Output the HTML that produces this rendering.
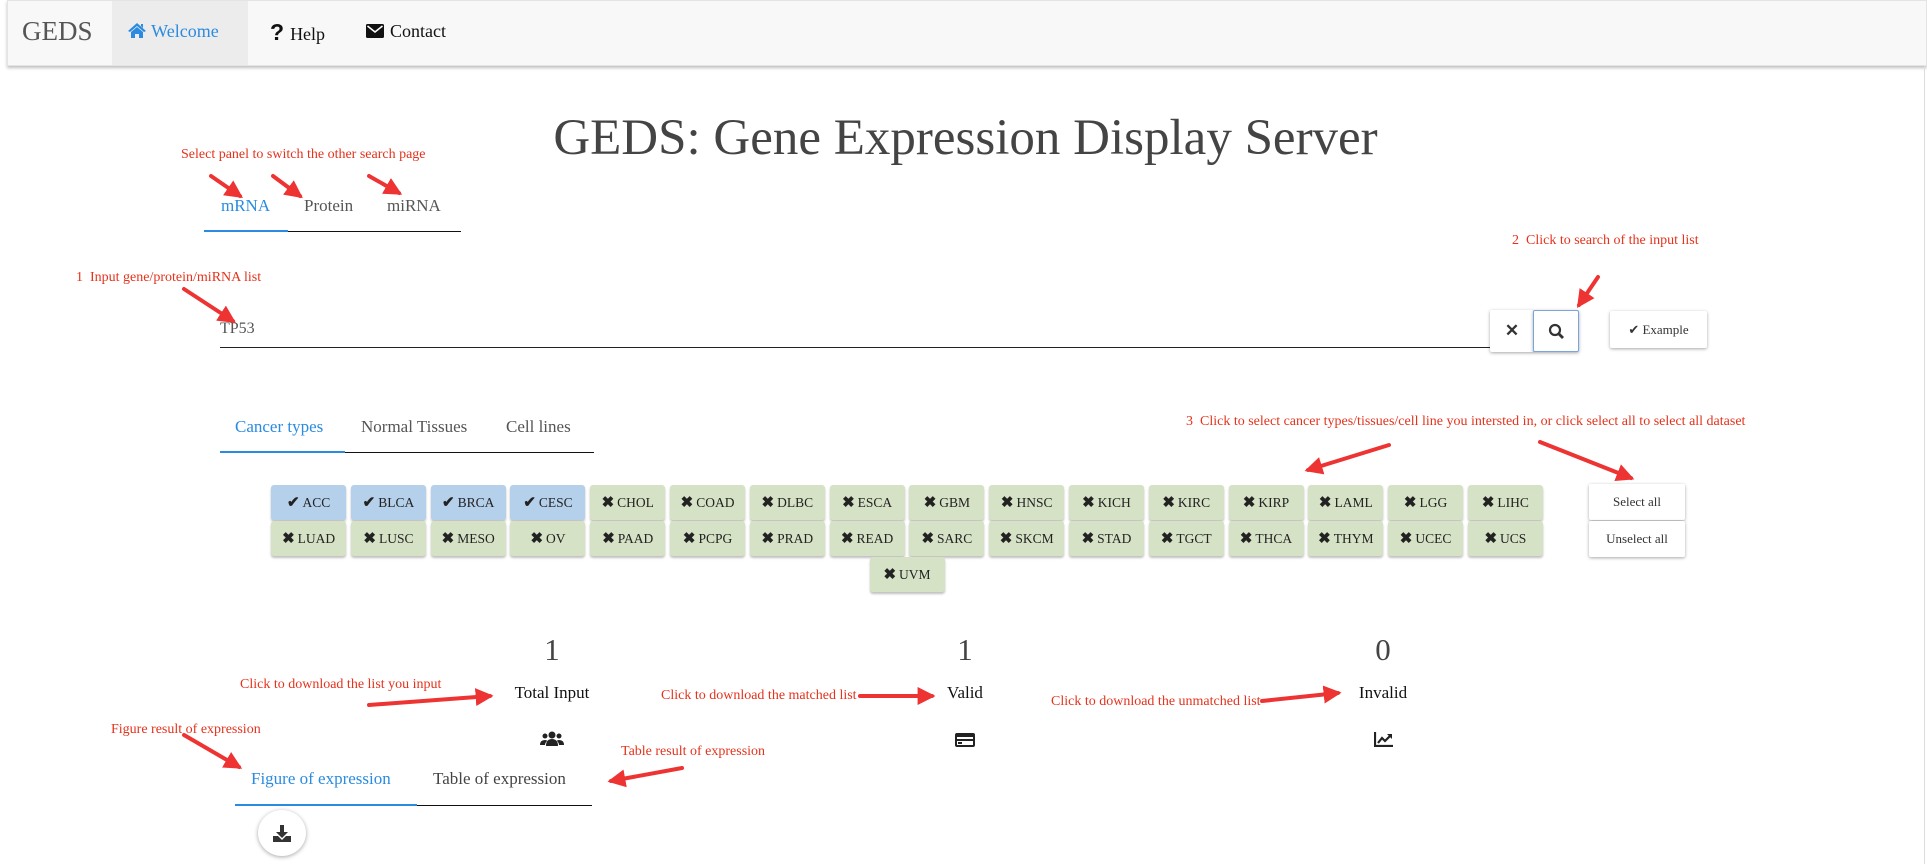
<!DOCTYPE html>
<html><head><meta charset="utf-8"><style>
*{box-sizing:border-box;margin:0;padding:0}
body{width:1927px;height:864px;overflow:hidden;background:#fff;font-family:"Liberation Serif",serif;color:#222;position:relative}
.a{position:absolute}
.nav{left:7px;top:0;width:1920px;height:66px;background:#f8f8f8;box-shadow:0 2px 3px rgba(0,0,0,.25);border:1px solid #e4e4e4}
.ann{position:absolute;color:#e4321c;font-size:14px;white-space:nowrap}
.chips{left:266px;top:485px;width:1282px;display:flex;flex-wrap:wrap;justify-content:center}
.chip{width:75px;height:35px;margin:0 2.4px 1px;background:#d6e2c6;border-radius:3px;box-shadow:0 2px 2px rgba(0,0,0,.25);font-size:13.5px;display:flex;align-items:center;justify-content:center}
.chip.s{background:#b5d0ea}
.chip b{font-size:15px;margin-right:3px}
.btn{background:#fff;box-shadow:0 1px 3px rgba(0,0,0,.35);border-radius:2px;display:flex;align-items:center;justify-content:center;font-size:13px;color:#333}
.num{font-size:31px;color:#444;text-align:center;width:200px}
.lab{font-size:17px;color:#111;text-align:center;width:200px}
</style></head><body>
<div class="a nav"></div>
<div class="a" style="left:22px;top:16px;font-size:27px;color:#555">GEDS</div>
<div class="a" style="left:112px;top:1px;width:136px;height:64px;background:#ececec"></div>
<div class="a" style="left:127px;top:21px;font-size:18px;color:#2a8be0">
<svg width="20" height="17" viewBox="0 0 20 17" style="vertical-align:-2px"><path d="M10 1 L1 9 L3 10 L10 4 L17 10 L19 9 Z M4 10 L4 16 L8 16 L8 12 L12 12 L12 16 L16 16 L16 10 L10 5 Z M14 2 h2 v4 l-2 -2Z" fill="#2a8be0"/></svg> Welcome</div>
<div class="a" style="left:270px;top:19px;font-size:18px;color:#111"><b style="font-family:'Liberation Sans',sans-serif;font-size:23px;margin-right:6px">?</b>Help</div>
<div class="a" style="left:366px;top:21px;font-size:18px;color:#111"><svg width="18" height="14" viewBox="0 0 18 14" style="vertical-align:-1px;margin-right:6px"><rect x="0" y="0" width="18" height="14" rx="1.5" fill="#111"/><path d="M1.5 2 L9 8 L16.5 2" stroke="#fff" stroke-width="1.6" fill="none"/></svg>Contact</div>
<div class="a" style="left:1924px;top:66px;width:1px;height:798px;background:#ddd"></div>

<div class="a" style="left:0;width:1927px;top:109px;text-align:center;padding-left:4px;font-size:51px;color:#444">GEDS: Gene Expression Display Server</div>

<div class="ann" style="left:181px;top:147px">Select panel to switch the other search page</div>
<div class="a" style="left:221px;top:196px;font-size:17px;color:#2a8be0">mRNA</div>
<div class="a" style="left:304px;top:196px;font-size:17px;color:#555">Protein</div>
<div class="a" style="left:387px;top:196px;font-size:17px;color:#555">miRNA</div>
<div class="a" style="left:204px;top:231px;width:257px;height:1px;background:#111"></div>
<div class="a" style="left:204px;top:230px;width:84px;height:2px;background:#2a8be0"></div>

<div class="ann" style="left:76px;top:270px">1&nbsp; Input gene/protein/miRNA list</div>
<div class="a" style="left:220px;top:320px;font-size:16px;color:#555">TP53</div>
<div class="a" style="left:220px;top:347px;width:1270px;height:1px;background:#222"></div>
<div class="a btn" style="left:1490px;top:310px;width:44px;height:42px;font-family:'Liberation Sans',sans-serif;font-weight:bold;font-size:17px;color:#333">✕</div>
<div class="a btn" style="left:1533px;top:310px;width:46px;height:42px;border:1px solid #7aa6e0"><svg width="17" height="17" viewBox="0 0 17 17"><circle cx="7" cy="7" r="5" stroke="#333" stroke-width="2.2" fill="none"/><path d="M10.5 10.5 L15 15" stroke="#333" stroke-width="2.8"/></svg></div>
<div class="a btn" style="left:1610px;top:311px;width:97px;height:37px">✔&nbsp;Example</div>
<div class="ann" style="left:1512px;top:233px">2&nbsp; Click to search of the input list</div>

<div class="a" style="left:235px;top:417px;font-size:17px;color:#2a8be0">Cancer types</div>
<div class="a" style="left:361px;top:417px;font-size:17px;color:#555">Normal Tissues</div>
<div class="a" style="left:506px;top:417px;font-size:17px;color:#555">Cell lines</div>
<div class="a" style="left:220px;top:452px;width:374px;height:1px;background:#111"></div>
<div class="a" style="left:220px;top:451px;width:125px;height:2px;background:#2a8be0"></div>
<div class="ann" style="left:1186px;top:414px">3&nbsp; Click to select cancer types/tissues/cell line you intersted in, or click select all to select all dataset</div>

<div class="a chips">
<div class="chip s"><b>✔</b>ACC</div><div class="chip s"><b>✔</b>BLCA</div><div class="chip s"><b>✔</b>BRCA</div><div class="chip s"><b>✔</b>CESC</div><div class="chip"><b>✖</b>CHOL</div><div class="chip"><b>✖</b>COAD</div><div class="chip"><b>✖</b>DLBC</div><div class="chip"><b>✖</b>ESCA</div><div class="chip"><b>✖</b>GBM</div><div class="chip"><b>✖</b>HNSC</div><div class="chip"><b>✖</b>KICH</div><div class="chip"><b>✖</b>KIRC</div><div class="chip"><b>✖</b>KIRP</div><div class="chip"><b>✖</b>LAML</div><div class="chip"><b>✖</b>LGG</div><div class="chip"><b>✖</b>LIHC</div>
<div class="chip"><b>✖</b>LUAD</div><div class="chip"><b>✖</b>LUSC</div><div class="chip"><b>✖</b>MESO</div><div class="chip"><b>✖</b>OV</div><div class="chip"><b>✖</b>PAAD</div><div class="chip"><b>✖</b>PCPG</div><div class="chip"><b>✖</b>PRAD</div><div class="chip"><b>✖</b>READ</div><div class="chip"><b>✖</b>SARC</div><div class="chip"><b>✖</b>SKCM</div><div class="chip"><b>✖</b>STAD</div><div class="chip"><b>✖</b>TGCT</div><div class="chip"><b>✖</b>THCA</div><div class="chip"><b>✖</b>THYM</div><div class="chip"><b>✖</b>UCEC</div><div class="chip"><b>✖</b>UCS</div>
<div class="chip"><b>✖</b>UVM</div>
</div>
<div class="a btn" style="left:1589px;top:484px;width:96px;height:36px">Select all</div>
<div class="a btn" style="left:1589px;top:521px;width:96px;height:36px">Unselect all</div>

<div class="a num" style="left:452px;top:632px">1</div>
<div class="a lab" style="left:452px;top:683px">Total Input</div>
<div class="a" style="left:540px;top:731px"><svg width="24" height="16" viewBox="0 0 24 16"><circle cx="12" cy="4" r="3.5" fill="#222"/><circle cx="5" cy="5" r="2.5" fill="#222"/><circle cx="19" cy="5" r="2.5" fill="#222"/><path d="M6 15 Q6 8 12 8 Q18 8 18 15Z M0 14 Q0 9 5 9 Q7 9 7 10 Q5 12 5 14Z M24 14 Q24 9 19 9 Q17 9 17 10 Q19 12 19 14Z" fill="#222"/></svg></div>
<div class="a num" style="left:865px;top:632px">1</div>
<div class="a lab" style="left:865px;top:683px">Valid</div>
<div class="a" style="left:955px;top:733px"><svg width="20" height="14" viewBox="0 0 20 14"><rect x="0" y="0" width="20" height="14" rx="2" fill="#222"/><rect x="2" y="4" width="16" height="2" fill="#fff"/><rect x="2" y="8" width="16" height="4" fill="#fff"/><rect x="3" y="9" width="4" height="2" fill="#222"/></svg></div>
<div class="a num" style="left:1283px;top:632px">0</div>
<div class="a lab" style="left:1283px;top:683px">Invalid</div>
<div class="a" style="left:1374px;top:732px"><svg width="19" height="15" viewBox="0 0 19 15"><path d="M1 0 V14 H19" stroke="#222" stroke-width="2.2" fill="none"/><path d="M4 11 L8 6 L11 9 L16 4" stroke="#222" stroke-width="2.2" fill="none"/><path d="M13 2 H18 V7Z" fill="#222"/></svg></div>

<div class="ann" style="left:240px;top:677px">Click to download the list you input</div>
<div class="ann" style="left:661px;top:688px">Click to download the matched list</div>
<div class="ann" style="left:1051px;top:694px">Click to download the unmatched list</div>
<div class="ann" style="left:111px;top:722px">Figure result of expression</div>
<div class="ann" style="left:621px;top:744px">Table result of expression</div>

<div class="a" style="left:251px;top:769px;font-size:17px;color:#2a8be0">Figure of expression</div>
<div class="a" style="left:433px;top:769px;font-size:17px;color:#444">Table of expression</div>
<div class="a" style="left:235px;top:805px;width:357px;height:1px;background:#111"></div>
<div class="a" style="left:235px;top:804px;width:182px;height:2px;background:#2a8be0"></div>
<div class="a" style="left:258px;top:810px;width:48px;height:46px;border-radius:50%;background:#fff;box-shadow:0 1px 4px rgba(0,0,0,.35);display:flex;align-items:center;justify-content:center"><svg width="18" height="17" viewBox="0 0 18 17"><path d="M7 0 H11 V7 H15 L9 13 L3 7 H7Z" fill="#333"/><path d="M0 11 H5 L9 15 L13 11 H18 V17 H0Z" fill="#333"/></svg></div>

<svg class="a" style="left:0;top:0" width="1927" height="864" viewBox="0 0 1927 864">
<defs><marker id="h" viewBox="0 0 10 10" refX="8" refY="5" markerWidth="4.5" markerHeight="4.5" orient="auto"><path d="M0 0 L10 5 L0 10 Z" fill="#ee3333"/></marker></defs>
<g stroke="#ee3333" stroke-width="4" fill="none" marker-end="url(#h)" stroke-linecap="round">
<line x1="211" y1="176" x2="240" y2="196"/>
<line x1="273" y1="176" x2="300" y2="196"/>
<line x1="369" y1="176" x2="399" y2="193"/>
<line x1="184" y1="289" x2="233" y2="321"/>
<line x1="1598" y1="277" x2="1579" y2="305"/>
<line x1="1389" y1="445" x2="1308" y2="470"/>
<line x1="1540" y1="442" x2="1631" y2="478"/>
<line x1="369" y1="705" x2="490" y2="696"/>
<line x1="860" y1="696" x2="932" y2="696"/>
<line x1="1262" y1="701" x2="1338" y2="693"/>
<line x1="184" y1="735" x2="239" y2="767"/>
<line x1="682" y1="768" x2="611" y2="781"/>
</g></svg>
</body></html>
